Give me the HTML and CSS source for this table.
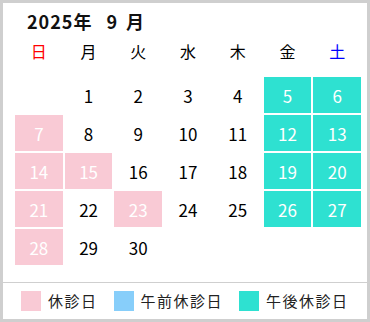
FILE: index.html
```html
<!DOCTYPE html>
<html lang="ja">
<head>
<meta charset="utf-8">
<link rel="stylesheet" href="styles.css">
</head>
<body>
<div class="cal">
  <div class="main">
    <div class="title"><span>2025年</span><span class="mon">9</span><span class="mon-k">月</span></div>
    <div class="week">
      <div class="sun">日</div><div>月</div><div>火</div><div>水</div><div>木</div><div>金</div><div class="sat">土</div>
    </div>
    <div class="days">
      <div></div><div>1</div><div>2</div><div>3</div><div>4</div><div class="pm">5</div><div class="pm">6</div>
      <div class="off">7</div><div>8</div><div>9</div><div>10</div><div>11</div><div class="pm">12</div><div class="pm">13</div>
      <div class="off">14</div><div class="off">15</div><div>16</div><div>17</div><div>18</div><div class="pm">19</div><div class="pm">20</div>
      <div class="off">21</div><div>22</div><div class="off">23</div><div>24</div><div>25</div><div class="pm">26</div><div class="pm">27</div>
      <div class="off">28</div><div>29</div><div>30</div><div></div><div></div><div></div><div></div>
    </div>
  </div>
  <div class="legend">
    <div class="item"><span class="sw sw-off"></span><span class="lbl">休診日</span></div>
    <div class="item"><span class="sw sw-am"></span><span class="lbl">午前休診日</span></div>
    <div class="item"><span class="sw sw-pm"></span><span class="lbl">午後休診日</span></div>
  </div>
</div>
</body>
</html>
```

FILE: styles.css
```css
html, body {
  margin: 0;
  padding: 0;
  background: #fff;
}
body {
  font-family: "Noto Sans CJK JP", "Noto Sans", sans-serif;
  color: #000;
}
.cal {
  width: 370px;
  height: 322px;
  box-sizing: border-box;
  border: 3px solid #cfcfcf;
  display: flex;
  flex-direction: column;
}
.main {
  height: 279px;
  padding-left: 12px;
  box-sizing: border-box;
}
.title {
  margin-top: 8px;
  padding-left: 12px;
  height: 20px;
  line-height: 20px;
  font-size: 18px;
  font-weight: bold;
  letter-spacing: 1px;
  color: #111;
}
.title .mon {
  margin-left: 14px;
}
.title .mon-k {
  margin-left: 8px;
}
.week {
  display: grid;
  grid-template-columns: repeat(7, 1fr);
  column-gap: 2px;
  width: 346px;
  margin-top: 6px;
  height: 28px;
  line-height: 28px;
  font-size: 16px;
  text-align: center;
  margin-bottom: 12px;
}
.week .sun { color: #ff0000; }
.week .sat { color: #0000ff; }
.days {
  display: grid;
  grid-template-columns: repeat(7, 1fr);
  grid-auto-rows: 36px;
  gap: 2px;
  width: 346px;
  font-size: 17px;
  text-align: center;
}
.days > div {
  display: flex;
  align-items: center;
  justify-content: center;
}
.days .off {
  background: #f9cad5;
  color: #fff;
}
.days .pm {
  background: #2ee1d1;
  color: #fff;
}
.legend {
  border-top: 1px solid #cfcfcf;
  flex: 1;
  display: flex;
  align-items: center;
  gap: 16px;
  padding-left: 18px;
}
.item {
  display: flex;
  align-items: center;
  gap: 7px;
}
.sw {
  width: 20px;
  height: 20px;
  display: block;
}
.sw-off { background: #f9cad5; }
.sw-am { background: #87cefa; }
.sw-pm { background: #2ee1d1; }
.lbl {
  font-size: 15px;
  letter-spacing: 1.5px;
  color: #222;
  line-height: 20px;
}
```
